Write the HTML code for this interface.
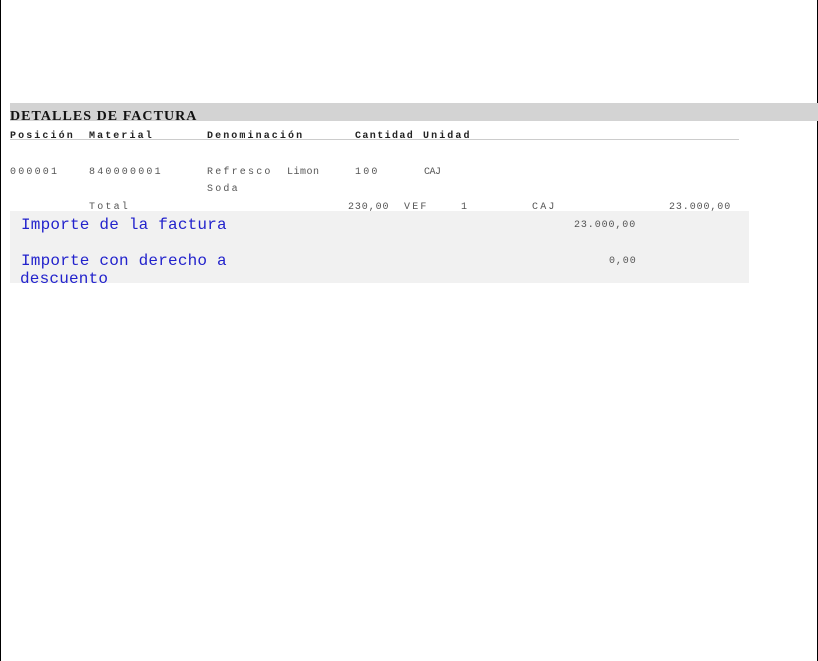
<!DOCTYPE html>
<html><head><meta charset="utf-8"><style>
body{margin:0;width:818px;height:661px;position:relative;background:#fff;overflow:hidden;font-family:"Liberation Mono",monospace}
.a{position:absolute;white-space:nowrap;font-family:"Liberation Mono",monospace}
.h{font-size:10px;letter-spacing:2.1px;color:#222;font-weight:bold}
.d{font-size:10px;letter-spacing:2.2px;color:#555}
.n{letter-spacing:0.9px}
.b{font-size:16px;color:#2222cc;letter-spacing:0.2px}
</style></head><body>
<div class="a" style="left:0;top:0;width:1px;height:661px;background:#000"></div>
<div class="a" style="left:817px;top:0;width:1px;height:661px;background:#000"></div>
<div class="a" style="left:10px;top:103px;width:808px;height:18px;background:#d3d3d3"></div>
<div class="a" style="left:10px;top:109px;font-size:14px;font-family:'Liberation Serif',serif;font-weight:bold;letter-spacing:1.05px;color:#111">DETALLES DE FACTURA</div>
<div class="a" style="left:10px;top:139px;width:729px;height:1px;background:#ccc"></div>
<div class="a h" style="left:10px;top:131px">Posición</div>
<div class="a h" style="left:89px;top:131px">Material</div>
<div class="a h" style="left:207px;top:131px">Denominación</div>
<div class="a h" style="left:355px;top:131px;letter-spacing:1.4px">Cantidad</div>
<div class="a h" style="left:423px;top:131px">Unidad</div>
<div class="a d" style="left:10px;top:167px">000001</div>
<div class="a d" style="left:89px;top:167px">840000001</div>
<div class="a d" style="left:207px;top:167px">Refresco</div>
<div class="a d" style="left:287px;top:167px;letter-spacing:0.5px">Limon</div>
<div class="a d" style="left:355px;top:167px">100</div>
<div class="a d" style="left:424px;top:167px;letter-spacing:-0.5px">CAJ</div>
<div class="a d" style="left:207px;top:184px">Soda</div>
<div class="a d" style="left:89px;top:202px">Total</div>
<div class="a d n" style="left:348px;top:202px">230,00</div>
<div class="a d" style="left:404px;top:202px">VEF</div>
<div class="a d" style="left:461px;top:202px">1</div>
<div class="a d" style="left:532px;top:202px">CAJ</div>
<div class="a d n" style="left:669px;top:202px">23.000,00</div>
<div class="a" style="left:10px;top:211px;width:739px;height:72px;background:#f1f1f1"></div>
<div class="a b" style="left:21px;top:216px">Importe de la factura</div>
<div class="a d n" style="left:574px;top:220px">23.000,00</div>
<div class="a b" style="left:21px;top:252px">Importe con derecho a</div>
<div class="a b" style="left:20px;top:270px">descuento</div>
<div class="a d n" style="left:609px;top:256px">0,00</div>
</body></html>
